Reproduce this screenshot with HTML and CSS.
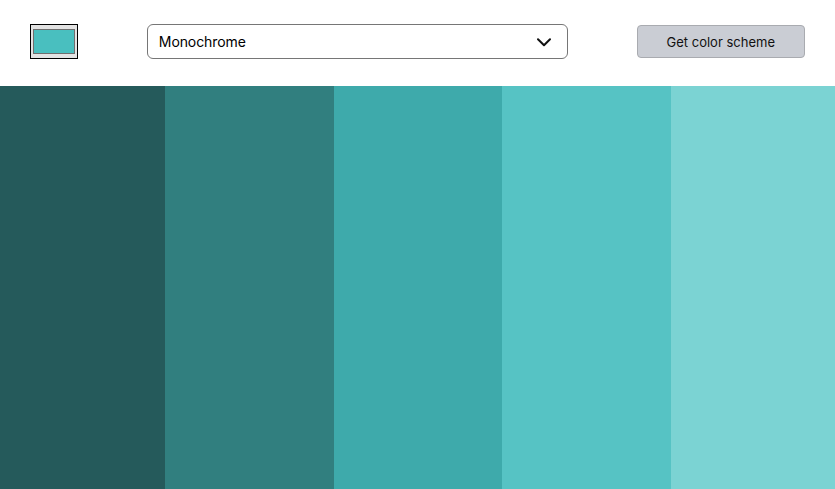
FILE: index.html
```html
<!DOCTYPE html>
<html>
<head>
<meta charset="utf-8">
<link rel="stylesheet" href="styles.css">
</head>
<body>
<header class="controls">
  <div class="color-input"><span class="swatch"></span></div>
  <div class="select">
    <span class="select-label">Monochrome</span>
    <svg class="chevron" width="14" height="9" viewBox="0 0 14 9"><path d="M1 1.2 L7 7.2 L13 1.2" fill="none" stroke="#111" stroke-width="2" stroke-linecap="round" stroke-linejoin="round"/></svg>
  </div>
  <button class="get-btn">Get color scheme</button>
</header>
<main class="scheme">
  <div class="stripe s1"></div>
  <div class="stripe s2"></div>
  <div class="stripe s3"></div>
  <div class="stripe s4"></div>
  <div class="stripe s5"></div>
</main>
</body>
</html>
```
FILE: styles.css
```css
* { box-sizing: border-box; }
html, body { margin: 0; padding: 0; height: 100%; }
body {
  font-family: Inter, "Noto Sans", "Liberation Sans", sans-serif;
  background: #fff;
  display: flex;
  flex-direction: column;
  overflow: hidden;
}
.controls {
  height: 86px;
  display: flex;
  align-items: flex-start;
  padding: 24px 30px 0 30px;
  flex: none;
}
.color-input {
  width: 48px;
  height: 35px;
  border: 1px solid #000;
  background: #e3e3e3;
  padding: 4px 2px;
  display: flex;
}
.swatch {
  flex: 1;
  background: #49bfbf;
  border: 1px solid #6e6e6e;
}
.select {
  margin-left: 69px;
  width: 422px;
  height: 35px;
  border: 1px solid #767676;
  border-radius: 6px;
  display: flex;
  align-items: center;
  justify-content: space-between;
  padding: 0 16px 0 11px;
  font-size: 14px;
  color: #000;
}
.select-label { letter-spacing: -0.1px; }
.chevron { display: block; margin-top: 1px; }
.get-btn {
  margin-left: 69px;
  margin-top: 1px;
  width: 169px;
  height: 33px;
  background: #cacdd4;
  border: 1px solid #a9abb0;
  border-radius: 4px;
  font-family: Inter, "Noto Sans", "Liberation Sans", sans-serif;
  font-size: 13px;
  color: #111;
  padding: 0;
}
.scheme {
  flex: 1;
  display: grid;
  grid-template-columns: 165px 169px 168px 169px 1fr;
}
.s1 { background: #255a5b; }
.s2 { background: #317f7f; }
.s3 { background: #3eaaab; }
.s4 { background: #56c3c4; }
.s5 { background: #7bd3d3; }
```
